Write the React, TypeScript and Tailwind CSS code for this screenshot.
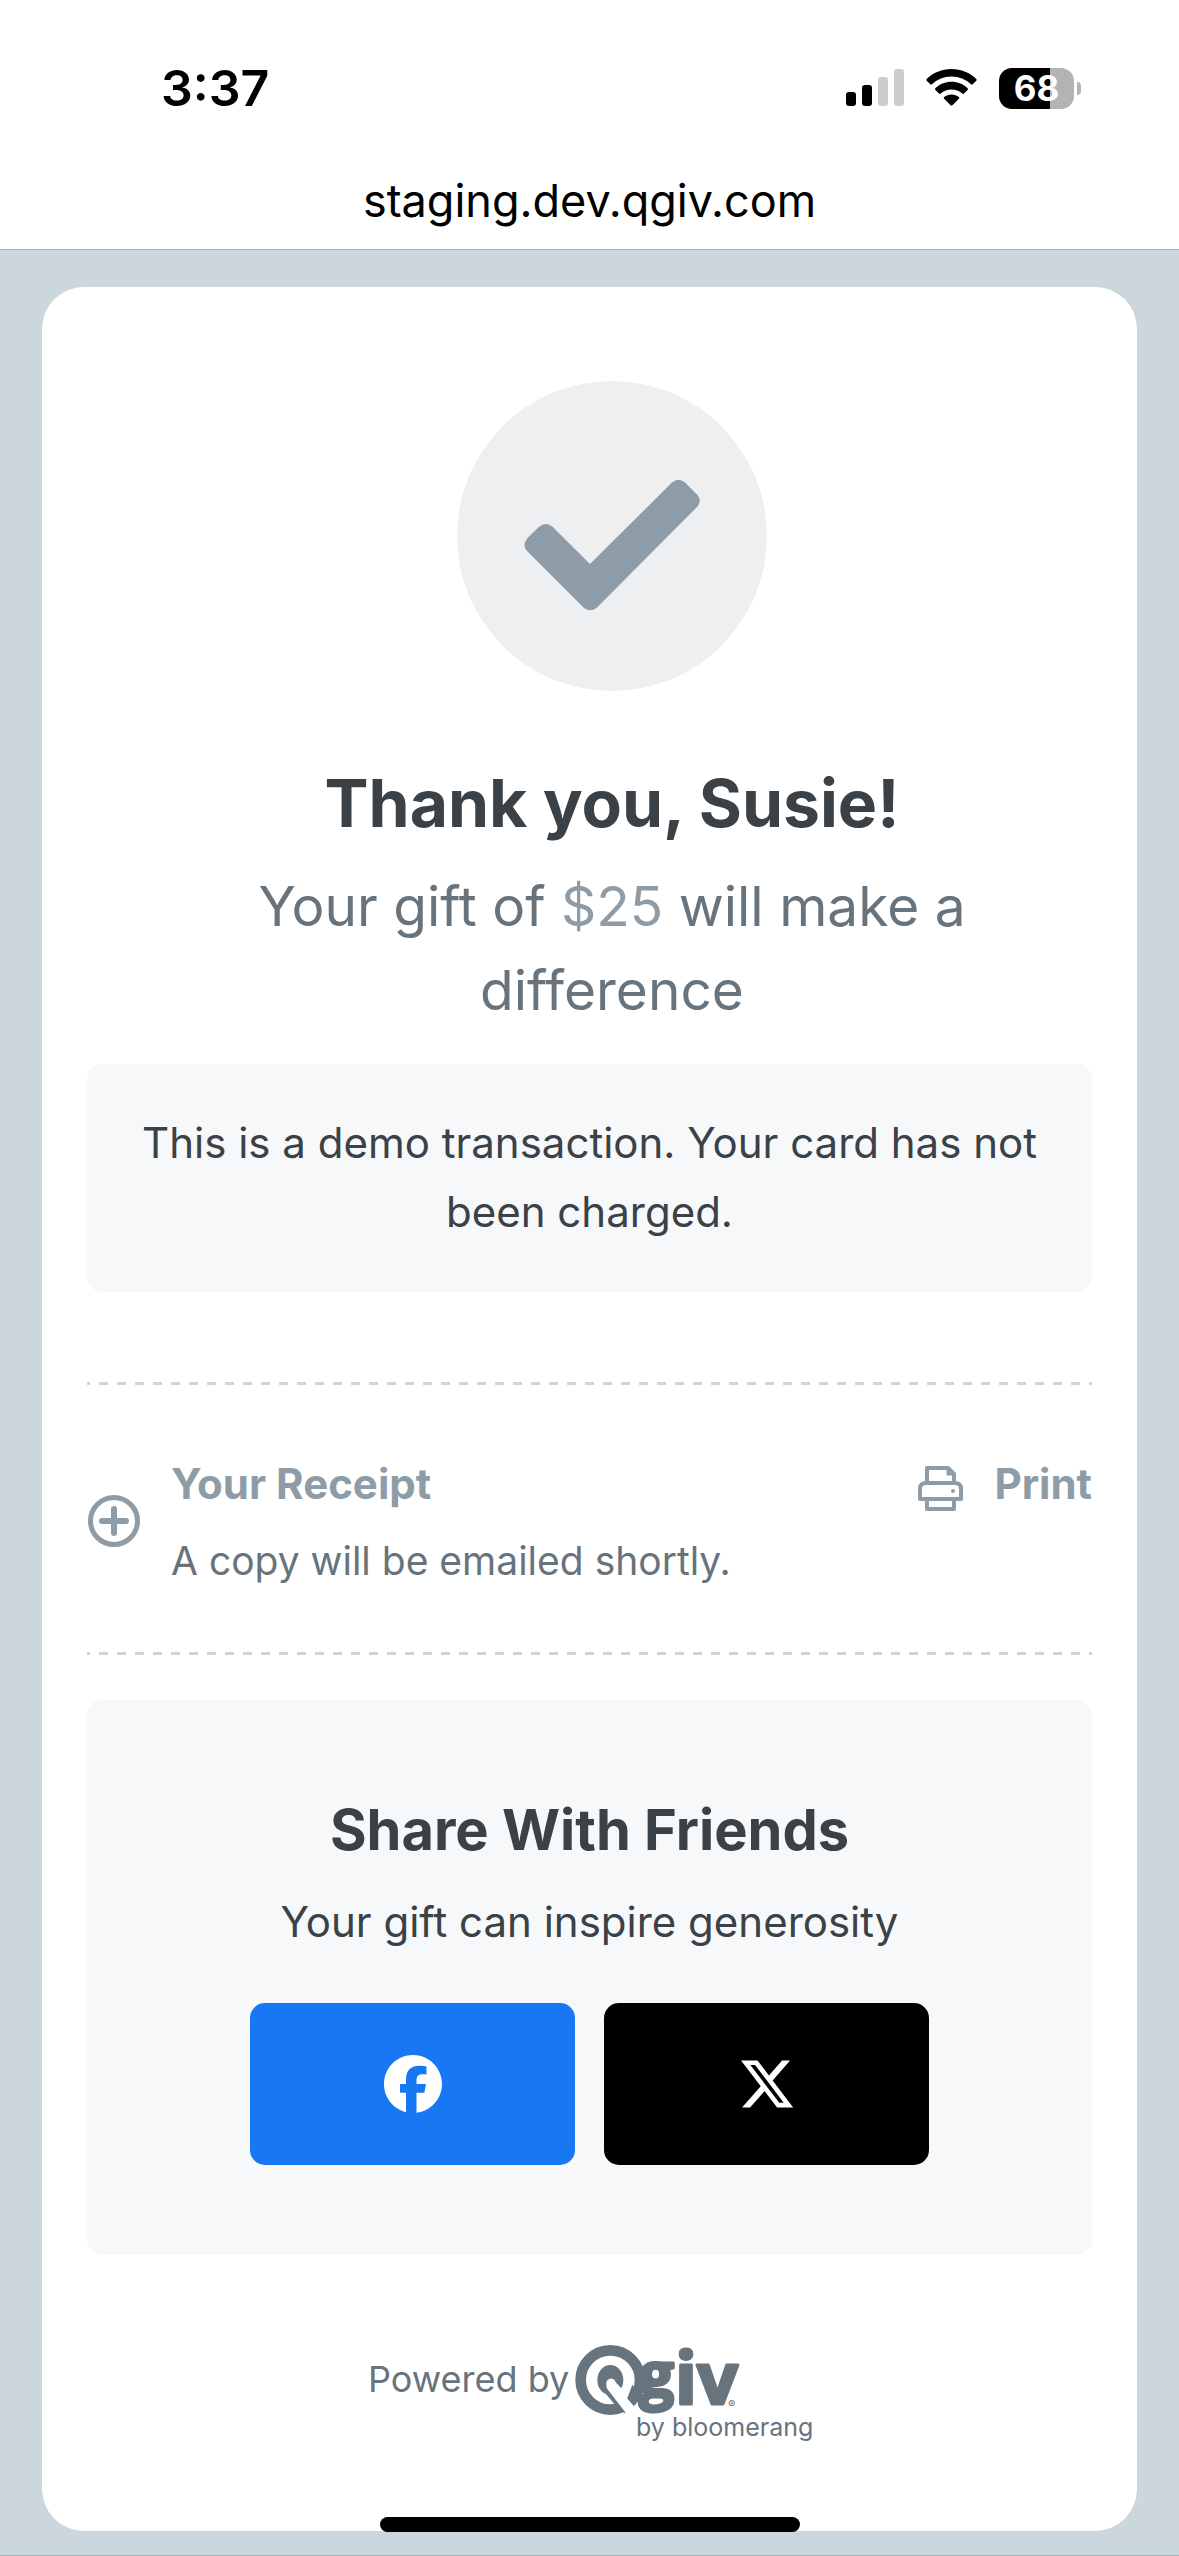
import { FaFacebook, FaXTwitter } from "react-icons/fa6";

function StatusBar() {
  return (
    <div className="flex h-[176px] items-center justify-between pl-[161px] pr-[98px]">
      <time className="text-[50px] leading-[60px] font-semibold">3:37</time>
      <div className="flex items-center gap-[22px]">
        <svg viewBox="0 0 58 38" className="h-[38px] w-[58px]" role="img" aria-label="Signal">
          <rect x="0" y="23" width="10" height="14" rx="3" />
          <rect x="16" y="16" width="10" height="21" rx="3" />
          <rect x="32" y="8" width="10" height="29" rx="3" fill="#cccccc" />
          <rect x="48" y="0" width="10" height="37" rx="3" fill="#cccccc" />
        </svg>
        <svg viewBox="0 0 51 38" className="h-[38px] w-[51px]" role="img" aria-label="Wi-Fi">
          <path d="M25.5 0C35.2 0 44 3.8 50.3 10c.5.5.5 1.200 0 1.700l-3.600 3.600c-.5.5-1.200.5-1.700 0A28 28 0 0 0 25.500 7.500 28 28 0 0 0 6 15.300c-.5.5-1.200.5-1.700 0L.7 11.700c-.5-.5-.5-1.200 0-1.700C7 3.800 15.800 0 25.500 0Z" />
          <path d="M25.500 12.800c6.200 0 11.900 2.400 16.100 6.400.5.500.5 1.200 0 1.700L38 24.500c-.5.500-1.200.5-1.700.1a16 16 0 0 0-21.600 0c-.5.400-1.200.400-1.700-.1l-3.600-3.600c-.5-.5-.5-1.200 0-1.700 4.200-4 9.900-6.400 16.100-6.400Z" />
          <path d="M25.500 25.500c2.800 0 5.300 1 7.300 2.600.5.400.6 1.100.1 1.600l-6.500 6.600c-.5.500-1.300.5-1.800 0l-6.500-6.600c-.5-.5-.4-1.200.1-1.600 2-1.600 4.500-2.600 7.300-2.600Z" />
        </svg>
        <div className="flex items-center gap-[3px]">
          <div className="flex h-[41px] w-[75px] items-center justify-center rounded-[13px] bg-[linear-gradient(90deg,#000000_0_51px,#b3b3b3_51px)] text-[35px] leading-none font-bold text-white">
            68
          </div>
          <div className="h-[13px] w-[4px] rounded-r-full bg-[#b3b3b3]" />
        </div>
      </div>
    </div>
  );
}

function Divider() {
  return (
    <hr className="h-[3px] border-0 bg-[repeating-linear-gradient(90deg,#ccd5d9_0_3px,transparent_3px_12px,#ccd5d9_12px_18px)]" />
  );
}

function CheckBadge() {
  return (
    <svg viewBox="0 0 310 310" className="mx-auto size-[310px]" aria-hidden="true">
      <circle cx="155" cy="155" r="155" fill="#eeeff1" />
      <path
        d="M133 183 215 101.500Q221.500 96 228 101.500L240 113.500Q245.500 119.500 240 126L139.500 227Q133.500 231.500 127 227L70.500 170.500Q64.500 164.500 70.500 157L82 145.800Q88.500 140 95.500 145.800Z"
        fill="#8e9ca7"
      />
    </svg>
  );
}

function Receipt() {
  return (
    <section className="flex items-center pt-[69px] pb-[64px]">
      <button type="button" aria-label="Expand receipt" className="mr-[31px] shrink-0">
        <svg viewBox="0 0 53 53" className="size-[53px]" fill="none" stroke="#8e9ca7">
          <circle cx="27" cy="26" r="23.500" strokeWidth="5" />
          <path d="M27 14v24M15 26h24" strokeWidth="6" strokeLinecap="round" />
        </svg>
      </button>
      <div className="flex-1">
        <h2 className="text-[42px] leading-[60px] font-bold text-[#8e9ca7]">Your Receipt</h2>
        <p className="mt-[20px] text-[39px] leading-[54px] text-[#67737d]">A copy will be emailed shortly.</p>
      </div>
      <button type="button" className="flex items-center gap-[31px] self-start text-[42px] leading-[60px] font-bold text-[#8e9ca7]">
        <svg viewBox="0 0 45 54" className="h-[54px] w-[45px]" fill="none" stroke="currentColor" strokeWidth="4" strokeLinejoin="round" aria-hidden="true">
          <path d="M9 26V11h21l6 6v9" />
          <path d="M29 11v7h7v-2l-5-5Z" fill="currentColor" strokeWidth="1" />
          <path d="M2 42V32q0-6 6-6h29q6 0 6 6v10Z" />
          <path d="M9 42v10h27V42" />
          <circle cx="35" cy="34" r="2" fill="currentColor" stroke="none" />
        </svg>
        Print
      </button>
    </section>
  );
}

function ShareBox() {
  return (
    <section className="mt-[45px] rounded-[15px] bg-[#f7f8fa] px-[45px] pt-[88px] pb-[90px] text-center text-[#3a4147]">
      <h2 className="text-[56px] leading-[84px] font-bold">Share With Friends</h2>
      <p className="mt-[16px] text-[42px] leading-[68px]">Your gift can inspire generosity</p>
      <div className="mt-[47px] flex justify-center gap-[29px]">
        <button type="button" aria-label="Share on Facebook" className="flex h-[162px] w-[325px] items-center justify-center rounded-[15px] bg-[#1877f2] text-white">
          <FaFacebook className="size-[58px]" />
        </button>
        <button type="button" aria-label="Share on X" className="flex h-[162px] w-[325px] items-center justify-center rounded-[15px] bg-black text-white">
          <FaXTwitter className="size-[58px]" />
        </button>
      </div>
    </section>
  );
}

function PoweredBy() {
  return (
    <a href="#qgiv" className="mx-auto mt-[89px] block w-[444px]" aria-label="Powered by Qgiv by bloomerang">
      <svg viewBox="0 0 444 98" className="h-[98px] w-full overflow-visible" fill="#67737d">
        <text x="0" y="48" className="font-['Inter'] text-[36px]">Powered by</text>
        <g transform="translate(-28 -24) scale(0.33333)">
          <circle cx="811" cy="180" r="89" fill="none" stroke="#67737d" strokeWidth="32" />
          <ellipse cx="811" cy="180" rx="39" ry="45" />
          <path d="M796 220 826 256 858 282 830 220Z" />
          <path d="M802 207 853 273 868 292 892 270 862 235 870 200 847 208 827 187A14 14 0 0 0 799 193Q798 201 802 207Z" fill="#ffffff" />
          <path d="M877 194 862 235 882 258 905 225Z" />
        </g>
        <g stroke="#67737d" strokeWidth="3" strokeLinejoin="round" className="font-['Open_Sans'] font-bold">
          <text x="271" y="53" className="text-[62px]">g</text>
          <text x="307" y="60" className="text-[72px]">iv</text>
        </g>
        <text x="360" y="64" className="font-['Inter'] text-[11px]">®</text>
        <text x="268" y="92" className="font-['Inter'] text-[25px]">by bloomerang</text>
      </svg>
    </a>
  );
}

export default function App() {
  return (
    <div className="relative flex min-h-screen flex-col bg-white font-['Inter',sans-serif] text-black">
      <header className="border-b border-[#a2afb5]">
        <StatusBar />
        <p className="h-[73px] text-center text-[45px] leading-[50px]">staging.dev.qgiv.com</p>
      </header>
      <main className="flex-1 border-b border-[#a2afb5] bg-[#cbd7dd] px-[42px] pt-[37px] pb-[24px]">
        <article className="rounded-[42px] bg-white px-[45px] pt-[94px] pb-[89px]">
          <div className="pl-[45px] text-center">
            <CheckBadge />
            <h1 className="mt-[70px] text-[66px] leading-[84px] font-bold text-[#3a4147]">Thank you, Susie!</h1>
            <p className="mx-auto mt-[19px] max-w-[800px] text-[55px] leading-[84px] text-[#67737d]">
              Your gift of <span className="text-[#8e9ca7]">$25</span> will make a difference
            </p>
          </div>
          <p className="mt-[32px] mb-[90px] rounded-[15px] bg-[#f7f8fa] px-[45px] pt-[44px] pb-[46px] text-center text-[42px] leading-[69px] text-[#3a4147]">
            This is a demo transaction. Your card has not been charged.
          </p>
          <Divider />
          <Receipt />
          <Divider />
          <ShareBox />
          <PoweredBy />
        </article>
      </main>
      <div className="absolute bottom-[24px] left-1/2 h-[15px] w-[420px] -translate-x-1/2 rounded-full bg-black" />
    </div>
  );
}
